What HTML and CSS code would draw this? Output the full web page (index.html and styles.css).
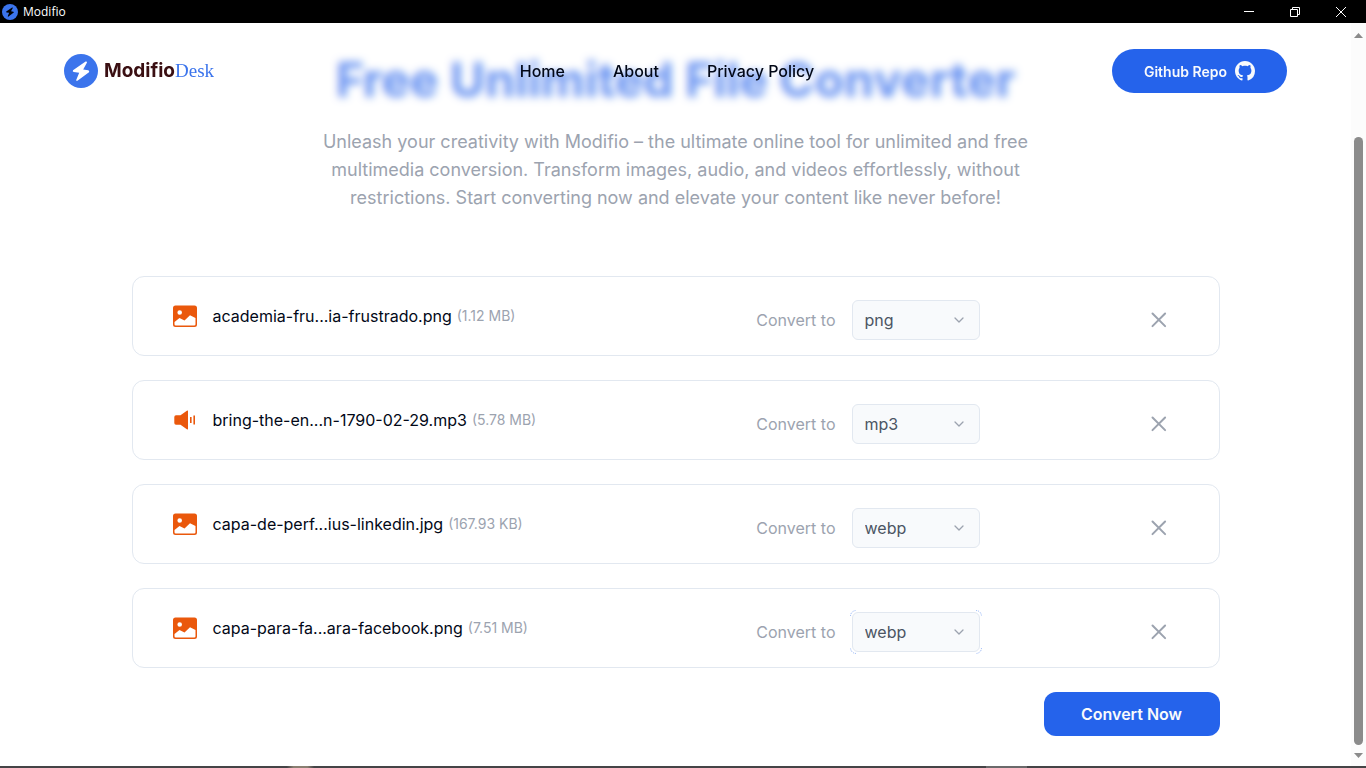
FILE: index.html
```html
<!DOCTYPE html>
<html lang="en">
<head>
<meta charset="utf-8">
<meta name="viewport" content="width=device-width, initial-scale=1">
<title>Modifio</title>
<link rel="stylesheet" href="styles.css">
</head>
<body>
<svg class="defs" aria-hidden="true">
  <symbol id="bolt" viewBox="0 0 34 34"><path d="M21.600 7.500L9 16.200Q8.200 17.600 9.800 18L15.200 18.800L12.200 26Q12.400 27.600 13.800 26.600L25 18.200Q25.800 16.800 24.200 16.300L19.200 15.400L23 8.600Q23 7 21.600 7.500Z"/></symbol>
  <symbol id="image" viewBox="0 0 24 24"><path fill-rule="evenodd" d="M2.500 1.500h19A2.500 2.500 0 0 1 24 4v16.500a2.500 2.500 0 0 1-2.500 2.500h-19A2.500 2.500 0 0 1 0 20.500V4a2.500 2.500 0 0 1 2.500-2.500ZM1.500 18v2.200q0 1.300 1.300 1.300h18.400q1.300 0 1.300-1.300V14L17 11.300l-5.500 5.300L6.500 14Z M9 8.500a2.300 2.300 0 1 0-4.600 0a2.300 2.300 0 1 0 4.600 0Z"/></symbol>
  <symbol id="sound" viewBox="0 0 24 24"><path d="M3 7.200h4.500L14.200 2.500q.8-.3.800.7v17.600q0 1-.8.700L7.500 16.800H3q-1.700 0-1.700-1.700V8.900Q1.300 7.200 3 7.200ZM17 9h1.600v6H17ZM20.400 7.500h1.600v9h-1.600Z"/></symbol>
  <symbol id="chevron" viewBox="0 0 16 16"><path d="m4 6 4 4 4-4" fill="none" stroke="currentColor" stroke-width="1.300" stroke-linecap="round" stroke-linejoin="round"/></symbol>
  <symbol id="cross" viewBox="0 0 24 24"><path d="M5.500 5.500l12.600 12.600M18.100 5.500l-12.600 12.600" fill="none" stroke="currentColor" stroke-width="2" stroke-linecap="round"/></symbol>
</svg>
<div class="window">
  <div class="titlebar">
    <svg class="titlebar-icon" viewBox="0 0 34 34" aria-hidden="true"><circle cx="17" cy="17" r="17" fill="#3b74ec"/><use href="#bolt" fill="#000"/></svg>
    <span class="titlebar-name">Modifio</span>
    <div class="window-controls">
      <button aria-label="Minimize"><svg viewBox="0 0 12 12"><path d="M1 5.500h10"/></svg></button>
      <button aria-label="Restore"><svg viewBox="0 0 12 12"><path d="M1.500 3.500h7v7h-7zM3.500 3V1.500h7v7H9"/></svg></button>
      <button aria-label="Close"><svg viewBox="0 0 12 12"><path d="M1 1l10 10M11 1L1 11"/></svg></button>
    </div>
  </div>

  <div class="viewport">
    <div class="page">
      <header class="header">
        <a class="logo" href="#">
          <svg class="logo-mark" viewBox="0 0 34 34" aria-hidden="true"><circle cx="17" cy="17" r="17" fill="#3b74ec"/><use href="#bolt" fill="#fff"/></svg>
          <span class="logo-text">Modifio<span class="logo-suffix">Desk</span></span>
        </a>
        <nav class="nav">
          <a href="#">Home</a>
          <a href="#">About</a>
          <a href="#">Privacy Policy</a>
        </nav>
        <a class="repo" href="#">Github Repo
          <svg class="repo-icon" viewBox="0 0 16 16" aria-hidden="true"><path d="M8 0C3.580 0 0 3.580 0 8c0 3.540 2.290 6.530 5.470 7.590.4.070.55-.17.55-.38 0-.19-.01-.82-.01-1.490-2.010.37-2.530-.49-2.690-.94-.09-.23-.48-.94-.82-1.130-.28-.15-.68-.52-.01-.53.63-.01 1.080.58 1.230.82.72 1.210 1.870.87 2.330.66.07-.52.28-.87.51-1.070-1.780-.2-3.640-.89-3.640-3.950 0-.87.31-1.590.82-2.150-.08-.2-.36-1.020.08-2.120 0 0 .67-.21 2.200.82.64-.18 1.320-.27 2-.27s1.360.09 2 .27c1.530-1.040 2.200-.82 2.200-.82.44 1.100.16 1.920.08 2.120.51.56.82 1.270.82 2.150 0 3.070-1.870 3.750-3.650 3.950.29.25.54.73.54 1.480 0 1.070-.01 1.930-.01 2.200 0 .21.15.46.55.38A8.010 8.010 0 0 0 16 8c0-4.420-3.580-8-8-8Z"/></svg>
        </a>
      </header>

      <main class="main">
        <div class="intro">
          <h1>Free Unlimited File Converter</h1>
          <p>Unleash your creativity with Modifio – the ultimate online tool for unlimited and free multimedia conversion. Transform images, audio, and videos effortlessly, without restrictions. Start converting now and elevate your content like never before!</p>
        </div>

        <form class="converter">
          <div class="file-row">
            <div class="file"><svg class="file-icon" aria-hidden="true"><use href="#image"/></svg><span class="file-name">academia-fru...ia-frustrado.png</span><span class="file-size">(1.12 MB)</span></div>
            <div class="target"><label for="f1">Convert to</label><div class="picker"><select id="f1"><option>png</option></select><svg class="chevron" aria-hidden="true"><use href="#chevron"/></svg></div></div>
            <button class="remove" type="button" aria-label="Remove file"><svg><use href="#cross"/></svg></button>
          </div>
          <div class="file-row">
            <div class="file"><svg class="file-icon" aria-hidden="true"><use href="#sound"/></svg><span class="file-name">bring-the-en...n-1790-02-29.mp3</span><span class="file-size">(5.78 MB)</span></div>
            <div class="target"><label for="f2">Convert to</label><div class="picker"><select id="f2"><option>mp3</option></select><svg class="chevron" aria-hidden="true"><use href="#chevron"/></svg></div></div>
            <button class="remove" type="button" aria-label="Remove file"><svg><use href="#cross"/></svg></button>
          </div>
          <div class="file-row">
            <div class="file"><svg class="file-icon" aria-hidden="true"><use href="#image"/></svg><span class="file-name">capa-de-perf...ius-linkedin.jpg</span><span class="file-size">(167.93 KB)</span></div>
            <div class="target"><label for="f3">Convert to</label><div class="picker"><select id="f3"><option>webp</option></select><svg class="chevron" aria-hidden="true"><use href="#chevron"/></svg></div></div>
            <button class="remove" type="button" aria-label="Remove file"><svg><use href="#cross"/></svg></button>
          </div>
          <div class="file-row">
            <div class="file"><svg class="file-icon" aria-hidden="true"><use href="#image"/></svg><span class="file-name">capa-para-fa...ara-facebook.png</span><span class="file-size">(7.51 MB)</span></div>
            <div class="target"><label for="f4">Convert to</label><div class="picker"><select id="f4"><option>webp</option></select><svg class="chevron" aria-hidden="true"><use href="#chevron"/></svg>
              <svg class="focus-corners" viewBox="0 0 132 44" aria-hidden="true"><path d="M.5 6Q1 1 6 .5M126 .5q5 .5 5.500 5.500M131.500 38q-.5 5-5.500 5.500M6 43.500Q1 43 .5 38"/></svg></div></div>
            <button class="remove" type="button" aria-label="Remove file"><svg><use href="#cross"/></svg></button>
          </div>
          <button class="convert" type="button">Convert Now</button>
        </form>
      </main>
    </div>

    <div class="scrollbar" aria-hidden="true">
      <svg class="scroll-arrow" viewBox="0 0 9 5"><path d="M0 5L4.500 0L9 5Z"/></svg>
      <div class="scroll-track"><div class="scroll-thumb"></div></div>
      <svg class="scroll-arrow" viewBox="0 0 9 5"><path d="M0 0h9L4.500 5Z"/></svg>
    </div>
  </div>
  <div class="desktop-edge"></div>
</div>
</body>
</html>
```
FILE: styles.css
```css
* {
  box-sizing: border-box;
}

body {
  margin: 0;
  font-family: Inter, "Liberation Sans", sans-serif;
  color: #020817;
  background: #fff;
}

a {
  color: inherit;
  text-decoration: none;
}

button,
select {
  font: inherit;
  cursor: pointer;
}

.defs {
  position: absolute;
  width: 0;
  height: 0;
}

.window {
  display: flex;
  flex-direction: column;
  height: 100vh;
}

/* Window title bar */
.titlebar {
  display: flex;
  flex: none;
  align-items: center;
  gap: 5px;
  height: 23px;
  padding-left: 2px;
  background: #000;
  color: #fff;
}

.titlebar-icon {
  width: 16px;
  height: 16px;
}

.titlebar-name {
  font: 12px/16px "Open Sans", "Noto Sans", sans-serif;
}

.window-controls {
  display: flex;
  margin-left: auto;
  margin-right: 2px;
}

.window-controls button {
  display: flex;
  align-items: center;
  justify-content: center;
  width: 46px;
  height: 20px;
  padding: 0;
  border: 0;
  background: none;
}

.window-controls svg {
  width: 12px;
  height: 12px;
  fill: none;
  stroke: #fff;
}

/* Page area */
.viewport {
  display: flex;
  flex: 1;
  min-height: 0;
}

.page {
  position: relative;
  flex: 1;
  min-width: 0;
  overflow: hidden;
}

.header {
  position: absolute;
  inset: 0 0 auto;
  z-index: 1;
  display: flex;
  align-items: center;
  justify-content: space-between;
  height: 96px;
  padding: 0 64px;
  background: rgba(255, 255, 255, 0.3);
  backdrop-filter: blur(4px);
}

.logo {
  display: flex;
  align-items: center;
  gap: 6px;
  min-width: 158px;
}

.logo-mark {
  width: 34px;
  height: 34px;
}

.logo-text {
  color: #3a0f12;
  font-size: 19px;
  font-weight: 700;
  line-height: 24px;
}

.logo-suffix {
  color: #3b74ec;
  font-family: "Liberation Serif", serif;
  font-weight: 400;
}

.nav {
  display: flex;
  gap: 48px;
  font-size: 16px;
  font-weight: 500;
  line-height: 24px;
}

.repo {
  display: flex;
  align-items: center;
  justify-content: center;
  gap: 8px;
  height: 44px;
  padding: 0 32px;
  border-radius: 22px;
  background: #2563eb;
  color: #f8fafc;
  font-size: 14px;
  font-weight: 600;
}

.repo-icon {
  width: 20px;
  height: 20px;
  fill: currentColor;
}

.main {
  display: flex;
  flex-direction: column;
  gap: 64px;
  max-width: 1152px;
  margin: 0 auto;
  padding: 33px 32px 32px;
}

.intro {
  display: flex;
  flex-direction: column;
  align-items: center;
  gap: 24px;
  text-align: center;
}

.intro h1 {
  margin: 0;
  color: #2563eb;
  font-size: 48px;
  font-weight: 700;
  line-height: 48px;
}

.intro p {
  max-width: 720px;
  margin: 0;
  color: #9ca3af;
  font-size: 18px;
  line-height: 28px;
}

/* File list */
.converter {
  display: flex;
  flex-direction: column;
  gap: 24px;
}

.file-row {
  display: grid;
  grid-template-columns: 1fr auto 199px;
  align-items: start;
  padding: 23px 40px 15px;
  border: 1px solid #e2e8f0;
  border-radius: 12px;
}

.file {
  display: flex;
  align-items: center;
  height: 32px;
}

.file-icon {
  width: 24px;
  height: 24px;
  margin-right: 16px;
  fill: #ea580c;
}

.file-name {
  margin-right: 5px;
  font-size: 16px;
  line-height: 24px;
}

.file-size {
  color: #9ca3af;
  font-size: 14px;
  line-height: 20px;
}

.target {
  display: flex;
  align-items: center;
  gap: 16px;
  color: #9ca3af;
  font-size: 16px;
  line-height: 24px;
}

.picker {
  position: relative;
  width: 128px;
}

.picker select {
  display: block;
  width: 100%;
  height: 40px;
  padding: 0 12px;
  appearance: none;
  border: 1px solid #e2e8f0;
  border-radius: 6px;
  background: #f8fafc;
  color: #4b5563;
}

.chevron {
  position: absolute;
  top: 12px;
  right: 13px;
  width: 16px;
  height: 16px;
  pointer-events: none;
}

.focus-corners {
  position: absolute;
  top: -2px;
  left: -2px;
  width: 132px;
  height: 44px;
  fill: none;
  stroke: #8fb1f5;
  stroke-width: 1;
  stroke-dasharray: 1 1;
  pointer-events: none;
}

.remove {
  display: flex;
  align-items: center;
  justify-content: center;
  justify-self: end;
  width: 40px;
  height: 40px;
  padding: 0;
  border: 0;
  border-radius: 20px;
  background: none;
  color: #9ca3af;
}

.remove svg {
  width: 24px;
  height: 24px;
}

.convert {
  align-self: flex-end;
  min-width: 176px;
  height: 44px;
  padding: 0 32px;
  border: 0;
  border-radius: 12px;
  background: #2563eb;
  color: #f8fafc;
  font-size: 16px;
  font-weight: 600;
}

/* Scrollbar */
.scrollbar {
  display: flex;
  flex: none;
  flex-direction: column;
  align-items: center;
  gap: 8px;
  width: 15px;
  padding: 10px 0 8px;
  background: #fcfcfc;
}

.scroll-arrow {
  flex: none;
  width: 9px;
  height: 5px;
  fill: #8b8b8b;
}

.scroll-track {
  display: flex;
  flex: 1;
  align-items: flex-end;
}

.scroll-thumb {
  width: 9px;
  height: 87%;
  border-radius: 5px;
  background: #8b8b8b;
}

/* Strip of the desktop under the window */
.desktop-edge {
  flex: none;
  height: 2px;
  background: linear-gradient(90deg, #454446 0 21%, #8a7f72 21.500% 22.500%, #454446 23% 72.200%, #6b6a6b 72.200% 75.200%, #454446 75.200%);
}
```
